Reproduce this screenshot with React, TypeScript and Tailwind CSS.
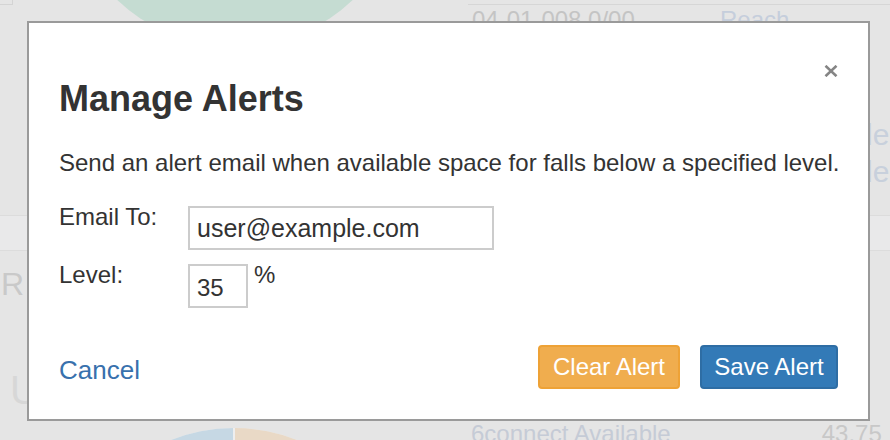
import React from "react";

function Background() {
  return (
    <div className="flex flex-col h-full">
      {/* upper area */}
      <div className="h-[215px] flex shrink-0">
        <div className="w-[468px] shrink-0 flex flex-col">
          <div className="w-[14px] h-[6px] -mt-px -ml-px border border-[#d4d4d4] shrink-0" />
          <div className="ml-[64px] mt-[-300px] w-[342px] h-[342px] shrink-0 rounded-full bg-[#c5dcd2]" />
        </div>
        <div className="flex-1 pt-[4px] flex flex-col">
          <div className="border-t border-[#d6d6d6] pt-[1px] pl-[4px] flex text-[24px] leading-[28px]">
            <span className="w-[248px] text-[#c4c4c4]">04-01-008 0/00</span>
            <span className="text-[#c5cedc]">Reach</span>
          </div>
          <div className="mt-[84px] pl-[398px] flex flex-col gap-[3px] text-[30px] leading-[34px] text-[#c8d0dc]">
            <span>le</span>
            <span>le</span>
          </div>
        </div>
      </div>
      {/* table header band */}
      <div className="h-[36px] shrink-0 bg-[#e9e9ea] border-y border-[#dcdcdc]" />
      {/* lower area */}
      <div className="flex flex-col">
        <div className="mt-[15px] pl-[1px] text-[32px] leading-[36px] text-[#c9c9c9]">R</div>
        <div className="mt-[66px] pl-[10px] text-[40px] leading-[44px] text-[#d7d7d7]">U</div>
        <div className="flex items-start">
          <div className="ml-[63px] mt-[16px] w-[342px] h-[342px] shrink-0 rounded-full overflow-hidden flex gap-[2px] bg-[#eeeeee]">
            <div className="flex-1 bg-[#c6d8e4]" />
            <div className="flex-1 bg-[#e9d9c6]" />
          </div>
          <span className="ml-[66px] mt-[8px] shrink-0 text-[24px] leading-[28px] text-[#c5cbd6]">6connect Available</span>
          <span className="ml-[151px] mt-[8px] shrink-0 text-[24px] leading-[28px] text-[#c8c8c8]">43.75</span>
        </div>
      </div>
    </div>
  );
}

export default function App() {
  return (
    <div
      className="relative w-[890px] h-[440px] overflow-hidden bg-[#e5e5e5] text-[#333]"
      style={{ fontFamily: '"Liberation Sans", Arial, Helvetica, sans-serif' }}
    >
      <Background />

      {/* modal */}
      <div className="absolute left-[27px] top-[21px] w-[843px] bg-white border-2 border-[#9a9a9a] px-[30px] pb-[30px]">
        <div className="flex justify-end pt-[42px]">
          <button className="block" aria-label="Close">
            <svg width="14" height="12" viewBox="0 0 14 12" className="block">
              <path d="M1.5 0.8 L12.5 11.2 M12.5 0.8 L1.5 11.2" stroke="#858585" strokeWidth="2.6" fill="none" />
            </svg>
          </button>
        </div>
        <h2 className="mt-[2px] text-[36px] leading-[40px] font-bold text-[#333]">Manage Alerts</h2>
        <p className="mt-[30px] text-[24px] leading-[28px] whitespace-nowrap text-[#333]">
          Send an alert email when available space for falls below a specified level.
        </p>
        <div className="mt-[29px] flex items-start">
          <label className="w-[129px] text-[24px] leading-[22px]">Email To:</label>
          <input
            readOnly
            value="user@example.com"
            className="w-[306px] h-[44px] border-2 border-[#cccccc] px-[7px] text-[25px] text-[#333] outline-none"
            style={{ fontFamily: '"Liberation Sans", Arial, sans-serif' }}
          />
        </div>
        <div className="mt-[14px] flex items-start">
          <label className="w-[129px] text-[24px] leading-[22px]">Level:</label>
          <input
            readOnly
            value="35"
            className="w-[60px] h-[44px] border-2 border-[#cccccc] px-[7px] pt-[4px] text-[24px] text-[#333] outline-none"
            style={{ fontFamily: '"Liberation Sans", Arial, sans-serif' }}
          />
          <span className="ml-[6px] text-[24px] leading-[22px]">%</span>
        </div>
        <div className="mt-[37px] flex items-center justify-between">
          <a className="mt-[5px] text-[26px] leading-[30px] text-[#3871ad]">Cancel</a>
          <div className="flex gap-[20px]">
            <button className="h-[44px] w-[142px] rounded-[4px] bg-[#f0ad4e] border-2 border-[#eea236] text-white text-[24px] leading-[28px]">
              Clear Alert
            </button>
            <button className="h-[44px] w-[138px] rounded-[4px] bg-[#337ab7] border-2 border-[#2e6da4] text-white text-[24px] leading-[28px]">
              Save Alert
            </button>
          </div>
        </div>
      </div>
    </div>
  );
}
